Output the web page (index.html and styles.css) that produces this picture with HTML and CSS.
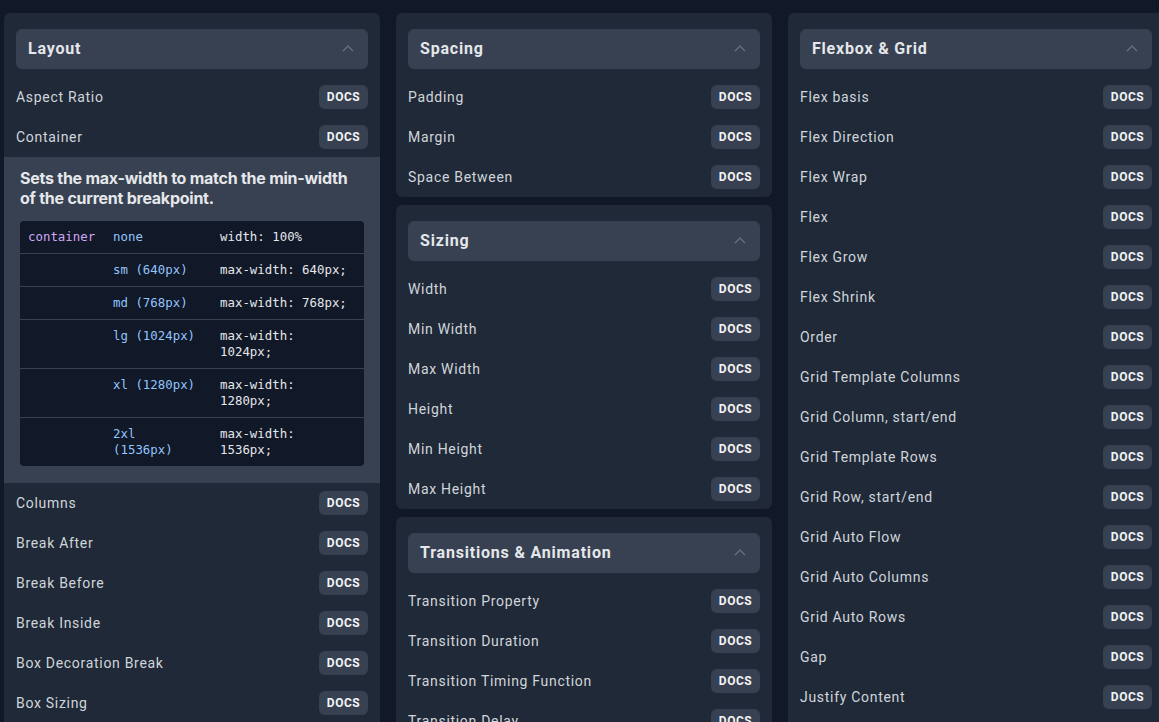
FILE: index.html
```html
<!DOCTYPE html>
<html lang="en">
<head>
<meta charset="utf-8">
<title>Tailwind Cheat Sheet</title>
<link rel="stylesheet" href="styles.css">
</head>
<body>
<main class="board">
  <div class="column">
    <section class="card">
      <header class="card-head"><h2>Layout</h2><svg class="chev" viewBox="0 0 12 7" width="12" height="7"><path d="M1 6 L6 1 L11 6" /></svg></header>
      <ul class="items">
        <li class="item"><span>Aspect Ratio</span><a class="docs">DOCS</a></li>
        <li class="item"><span>Container</span><a class="docs">DOCS</a></li>
        <li class="detail">
          <p class="detail-text">Sets the max-width to match the min-width of the current breakpoint.</p>
          <div class="code">
            <div class="code-row"><span class="c-cls">container</span><span class="c-bp"><span class="w2">none</span></span><span class="c-val"><span class="w3">width: 100%</span></span></div>
            <div class="code-row"><span class="c-cls"></span><span class="c-bp"><span class="w2">sm (640px)</span></span><span class="c-val"><span class="w3">max-width: 640px;</span></span></div>
            <div class="code-row"><span class="c-cls"></span><span class="c-bp"><span class="w2">md (768px)</span></span><span class="c-val"><span class="w3">max-width: 768px;</span></span></div>
            <div class="code-row"><span class="c-cls"></span><span class="c-bp"><span class="w2">lg (1024px)</span></span><span class="c-val"><span class="w3">max-width: 1024px;</span></span></div>
            <div class="code-row"><span class="c-cls"></span><span class="c-bp"><span class="w2">xl (1280px)</span></span><span class="c-val"><span class="w3">max-width: 1280px;</span></span></div>
            <div class="code-row"><span class="c-cls"></span><span class="c-bp"><span class="w2">2xl (1536px)</span></span><span class="c-val"><span class="w3">max-width: 1536px;</span></span></div>
          </div>
        </li>
        <li class="item"><span>Columns</span><a class="docs">DOCS</a></li>
        <li class="item"><span>Break After</span><a class="docs">DOCS</a></li>
        <li class="item"><span>Break Before</span><a class="docs">DOCS</a></li>
        <li class="item"><span>Break Inside</span><a class="docs">DOCS</a></li>
        <li class="item"><span>Box Decoration Break</span><a class="docs">DOCS</a></li>
        <li class="item"><span>Box Sizing</span><a class="docs">DOCS</a></li>
        <li class="item"><span>Display</span><a class="docs">DOCS</a></li>
        <li class="item"><span>Floats</span><a class="docs">DOCS</a></li>
      </ul>
    </section>
  </div>

  <div class="column">
    <section class="card">
      <header class="card-head"><h2>Spacing</h2><svg class="chev" viewBox="0 0 12 7" width="12" height="7"><path d="M1 6 L6 1 L11 6" /></svg></header>
      <ul class="items">
        <li class="item"><span>Padding</span><a class="docs">DOCS</a></li>
        <li class="item"><span>Margin</span><a class="docs">DOCS</a></li>
        <li class="item"><span>Space Between</span><a class="docs">DOCS</a></li>
      </ul>
    </section>
    <section class="card">
      <header class="card-head"><h2>Sizing</h2><svg class="chev" viewBox="0 0 12 7" width="12" height="7"><path d="M1 6 L6 1 L11 6" /></svg></header>
      <ul class="items">
        <li class="item"><span>Width</span><a class="docs">DOCS</a></li>
        <li class="item"><span>Min Width</span><a class="docs">DOCS</a></li>
        <li class="item"><span>Max Width</span><a class="docs">DOCS</a></li>
        <li class="item"><span>Height</span><a class="docs">DOCS</a></li>
        <li class="item"><span>Min Height</span><a class="docs">DOCS</a></li>
        <li class="item"><span>Max Height</span><a class="docs">DOCS</a></li>
      </ul>
    </section>
    <section class="card">
      <header class="card-head"><h2>Transitions &amp; Animation</h2><svg class="chev" viewBox="0 0 12 7" width="12" height="7"><path d="M1 6 L6 1 L11 6" /></svg></header>
      <ul class="items">
        <li class="item"><span>Transition Property</span><a class="docs">DOCS</a></li>
        <li class="item"><span>Transition Duration</span><a class="docs">DOCS</a></li>
        <li class="item"><span>Transition Timing Function</span><a class="docs">DOCS</a></li>
        <li class="item"><span>Transition Delay</span><a class="docs">DOCS</a></li>
        <li class="item"><span>Animation</span><a class="docs">DOCS</a></li>
      </ul>
    </section>
  </div>

  <div class="column">
    <section class="card">
      <header class="card-head"><h2>Flexbox &amp; Grid</h2><svg class="chev" viewBox="0 0 12 7" width="12" height="7"><path d="M1 6 L6 1 L11 6" /></svg></header>
      <ul class="items">
        <li class="item"><span>Flex basis</span><a class="docs">DOCS</a></li>
        <li class="item"><span>Flex Direction</span><a class="docs">DOCS</a></li>
        <li class="item"><span>Flex Wrap</span><a class="docs">DOCS</a></li>
        <li class="item"><span>Flex</span><a class="docs">DOCS</a></li>
        <li class="item"><span>Flex Grow</span><a class="docs">DOCS</a></li>
        <li class="item"><span>Flex Shrink</span><a class="docs">DOCS</a></li>
        <li class="item"><span>Order</span><a class="docs">DOCS</a></li>
        <li class="item"><span>Grid Template Columns</span><a class="docs">DOCS</a></li>
        <li class="item"><span>Grid Column, start/end</span><a class="docs">DOCS</a></li>
        <li class="item"><span>Grid Template Rows</span><a class="docs">DOCS</a></li>
        <li class="item"><span>Grid Row, start/end</span><a class="docs">DOCS</a></li>
        <li class="item"><span>Grid Auto Flow</span><a class="docs">DOCS</a></li>
        <li class="item"><span>Grid Auto Columns</span><a class="docs">DOCS</a></li>
        <li class="item"><span>Grid Auto Rows</span><a class="docs">DOCS</a></li>
        <li class="item"><span>Gap</span><a class="docs">DOCS</a></li>
        <li class="item"><span>Justify Content</span><a class="docs">DOCS</a></li>
        <li class="item"><span>Justify Items</span><a class="docs">DOCS</a></li>
      </ul>
    </section>
  </div>
</main>
</body>
</html>
```

FILE: styles.css
```css
html, body {
  margin: 0;
  padding: 0;
  overflow: hidden;
  background: #111827;
  height: 100%;
}

body {
  font-family: Roboto, "Liberation Sans", sans-serif;
  color: #d1d5db;
}

.board {
  display: grid;
  grid-template-columns: repeat(3, 376px);
  column-gap: 16px;
  padding: 13px 0 0 4px;
  align-items: start;
  width: max-content;
}

.column {
  display: flex;
  flex-direction: column;
  gap: 8px;
}

.card {
  background: #1f2937;
  border-radius: 6px;
  padding: 16px 12px 0;
}

.card-head {
  box-sizing: border-box;
  display: flex;
  align-items: center;
  justify-content: space-between;
  height: 40px;
  padding: 0 14px 1px 12px;
  background: #374151;
  border-radius: 6px;
  margin-bottom: 8px;
}

.card-head h2 {
  margin: 0;
  font-size: 16px;
  font-weight: 700;
  letter-spacing: 0.8px;
  color: #e5e7eb;
}

.chev {
  display: block;
  fill: none;
  stroke: #6b7280;
  stroke-width: 1.2;
}

.items {
  list-style: none;
  margin: 0;
  padding: 0;
}

.item {
  display: flex;
  align-items: center;
  justify-content: space-between;
  height: 40px;
  font-size: 14px;
  letter-spacing: 0.7px;
  color: #d1d5db;
}

.docs {
  display: inline-flex;
  align-items: center;
  justify-content: center;
  width: 49px;
  height: 24px;
  border-radius: 6px;
  background: #374151;
  color: #f3f4f6;
  font-size: 12px;
  font-weight: 700;
  letter-spacing: 0.5px;
}

.detail {
  margin: 0 -12px;
  background: #374151;
  padding: 11px 16px 17px;
}

.detail-text {
  margin: 0 0 13px;
  font-family: Inter, "Noto Sans", sans-serif;
  font-size: 16px;
  line-height: 20px;
  font-weight: 700;
  letter-spacing: -0.25px;
  color: #e5e7eb;
}

.code {
  background: #111827;
  border-radius: 4px;
  font-family: "DejaVu Sans Mono", "Liberation Mono", monospace;
  font-size: 12.4px;
  line-height: 16px;
}

.code-row {
  display: grid;
  grid-template-columns: 85px 107px 1fr;
  border-top: 1px solid #374151;
}

.code-row:first-child {
  border-top: none;
}

.code-row > span {
  padding: 8px;
}

.c-cls {
  color: #d0a8f5;
}

.c-bp {
  color: #93c5fd;
}

.c-val {
  color: #e5e7eb;
}

.w2 {
  display: block;
  max-width: 11.5ch;
}

.w3 {
  display: block;
  max-width: 17.5ch;
}
```
